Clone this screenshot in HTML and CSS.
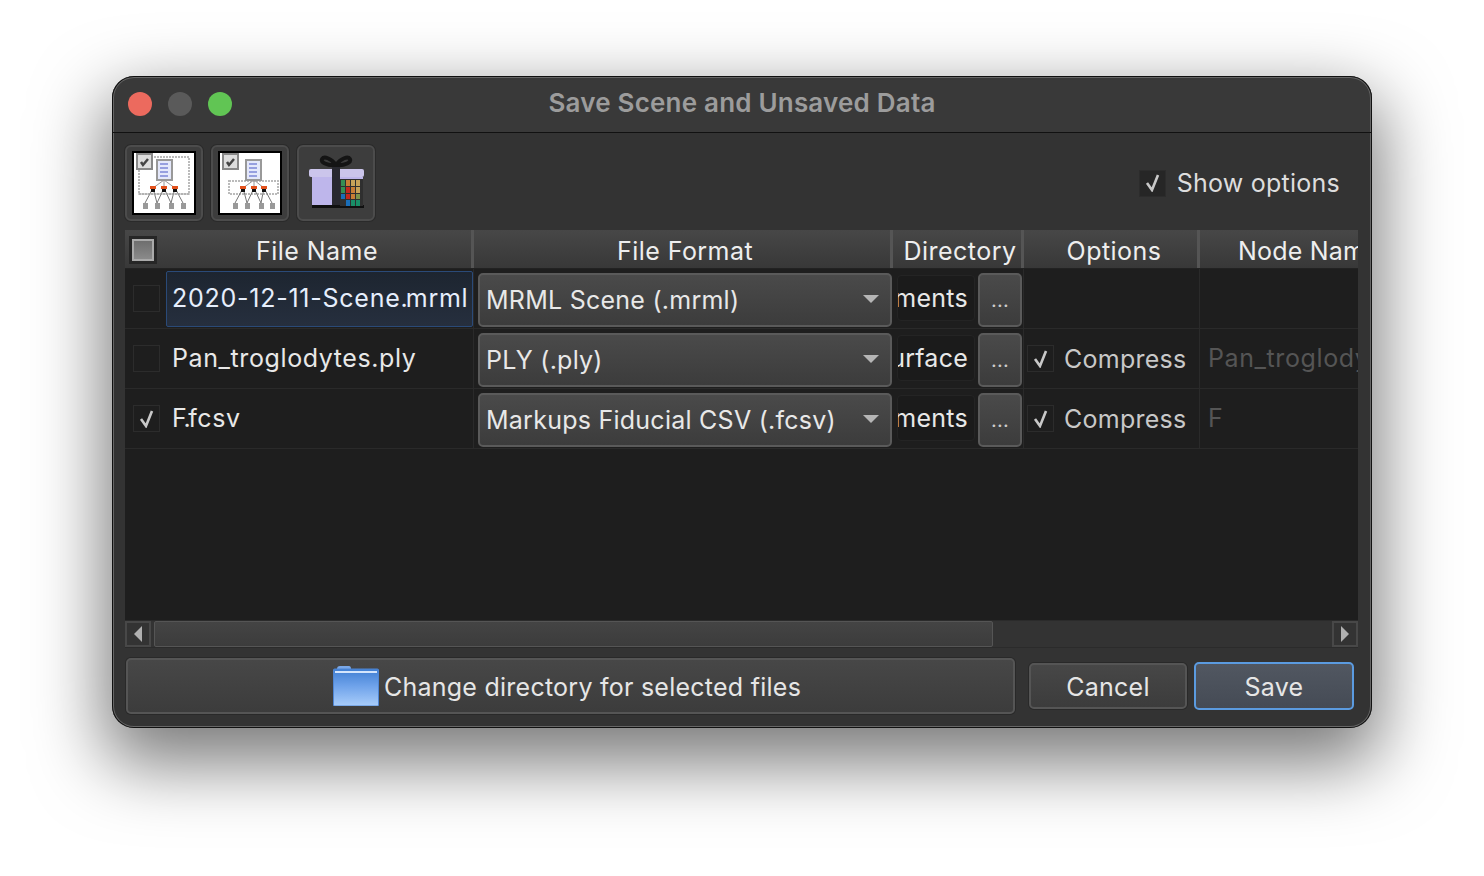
FILE: index.html
```html
<!DOCTYPE html>
<html lang="en">
<head>
    <meta charset="UTF-8">
    <title>Save Scene and Unsaved Data</title>
    <link rel="stylesheet" href="styles.css">
</head>
<body>
    <div class="window">
        <div class="titlebar">
            <div class="lights">
                <span class="light red"></span>
                <span class="light grey"></span>
                <span class="light green"></span>
            </div>
            <div class="title">Save Scene and Unsaved Data</div>
        </div>

        <div class="toolbar">
            <button class="tool">
                <svg class="icon" width="64" height="64" viewBox="0 0 64 64">
                    <rect x="1" y="1" width="62" height="62" fill="#fff" stroke="#000" stroke-width="2"/>
                    <rect x="7" y="6" width="50" height="37" fill="none" stroke="#bbb" stroke-width="2" stroke-dasharray="2 1"/>
                    <rect x="5" y="3" width="15" height="15" fill="#ddd" stroke="#888" stroke-width="2"/>
                    <path d="M9 11l2 3 5-6" fill="none" stroke="#444" stroke-width="2.5"/>
                    <rect x="25" y="9" width="15" height="20" fill="#e4e8fb" stroke="#999" stroke-width="2"/>
                    <path d="M28 13h8M28 17h8M28 21h8M28 25h8" stroke="#7c86d8" stroke-width="1.5"/>
                    <path d="M32 29L21 37M32 29v8M32 29l11 8" stroke="#999"/>
                    <path d="M21 37L13 52M21 37l4 15M43 37l-4 15M43 37l8 15M32 37l-7 15M32 37l7 15" stroke="#777" fill="none"/>
                    <path d="M6 43h52" stroke="#aaa"/>
                    <path d="M18 35h6v3h-6zM29 35h6v3h-6zM40 35h6v3h-6z" fill="#e2521d"/>
                    <path d="M19 38h4v3h-4zM30 38h4v3h-4zM41 38h4v3h-4z" fill="#111"/>
                    <path d="M11 52h5v6h-5zM23 52h5v6h-5zM37 52h5v6h-5zM49 52h5v6h-5z" fill="#999"/>
                </svg>
            </button>
            <button class="tool">
                <svg class="icon" width="64" height="64" viewBox="0 0 64 64">
                    <rect x="1" y="1" width="62" height="62" fill="#fff" stroke="#000" stroke-width="2"/>
                    <rect x="11" y="30" width="49" height="13" fill="none" stroke="#bbb" stroke-width="2" stroke-dasharray="2 1"/>
                    <rect x="5" y="3" width="15" height="15" fill="#ddd" stroke="#888" stroke-width="2"/>
                    <path d="M9 11l2 3 5-6" fill="none" stroke="#444" stroke-width="2.5"/>
                    <rect x="28" y="9" width="15" height="20" fill="#e4e8fb" stroke="#999" stroke-width="2"/>
                    <path d="M31 13h8M31 17h8M31 21h8M31 25h8" stroke="#7c86d8" stroke-width="1.5"/>
                    <path d="M36 29L25 37M36 29v8M36 29l10 8" stroke="#999"/>
                    <path d="M25 37L17 52M25 37l4 15M46 37l-3 15M46 37l8 15M36 37l-7 15M36 37l7 15" stroke="#777" fill="none"/>
                    <path d="M22 35h6v3h-6zM33 35h6v3h-6zM43 35h6v3h-6z" fill="#e2521d"/>
                    <path d="M23 38h4v3h-4zM34 38h4v3h-4zM44 38h4v3h-4z" fill="#111"/>
                    <path d="M15 52h5v6h-5zM27 52h5v6h-5zM41 52h5v6h-5zM52 52h5v6h-5z" fill="#999"/>
                </svg>
            </button>
            <button class="tool">
                <svg class="icon gift" width="64" height="64" viewBox="0 0 64 64">
                    <path d="M32 14C27 7 20 5 18 8s5 7 14 6c9 1 16-3 14-6s-9-1-14 6z" fill="none" stroke="#161616" stroke-width="4"/>
                    <rect x="8" y="26" width="51" height="28" fill="#cfc6ff"/>
                    <rect x="5" y="18" width="55" height="8" rx="2" fill="#ddd6ff"/>
                    <rect x="8" y="54" width="52" height="3" fill="#111"/>
                    <rect x="28" y="16" width="8" height="38" fill="#2b2b33"/>
                    <g>
                        <rect x="36" y="28" width="23" height="27" fill="#333"/>
                        <rect x="37" y="29" width="4" height="6" fill="#3a9a5a"/>
                        <rect x="42" y="29" width="4" height="6" fill="#d8883a"/>
                        <rect x="47" y="29" width="4" height="6" fill="#d8b060"/>
                        <rect x="52" y="29" width="4" height="6" fill="#d8b060"/>
                        <rect x="37" y="36" width="4" height="6" fill="#3a9a5a"/>
                        <rect x="42" y="36" width="4" height="6" fill="#d42a20"/>
                        <rect x="47" y="36" width="4" height="6" fill="#d8883a"/>
                        <rect x="52" y="36" width="4" height="6" fill="#d8b060"/>
                        <rect x="37" y="43" width="4" height="5" fill="#1c78c8"/>
                        <rect x="42" y="43" width="4" height="5" fill="#d42a20"/>
                        <rect x="47" y="43" width="4" height="5" fill="#d8883a"/>
                        <rect x="52" y="43" width="4" height="5" fill="#88a050"/>
                        <rect x="42" y="49" width="4" height="6" fill="#1c78c8"/>
                        <rect x="47" y="49" width="4" height="6" fill="#1a9a70"/>
                        <rect x="52" y="49" width="4" height="6" fill="#1a9a70"/>
                    </g>
                </svg>
            </button>
            <label class="show-options">
                <span class="check dark"><svg class="tick" width="17" height="18" viewBox="0 0 17 18"><path d="M3 9l5 7 6-15"/></svg></span>
                <span>Show options</span>
            </label>
        </div>

        <div class="table">
            <div class="row head">
                <div class="head-cell name-head">
                    <span class="head-check"><i></i></span>
                    <span>File Name</span>
                </div>
                <div class="head-cell format-head">File Format</div>
                <div class="head-cell dir-head">Directory</div>
                <div class="head-cell opt-head">Options</div>
                <div class="head-cell">Node Name</div>
            </div>

            <div class="row">
                <div class="cell name">
                    <span class="check"></span>
                    <div class="editor">2020-12-11-Scene<span class="tight">.</span>mrml</div>
                </div>
                <div class="cell">
                    <div class="combo"><span>MRML Scene (.mrml)</span><i class="caret"></i></div>
                </div>
                <div class="cell dir">
                    <div class="dir-field"><span>Documents</span></div>
                    <button class="dots">...</button>
                </div>
                <div class="cell opt"></div>
                <div class="cell node"></div>
            </div>

            <div class="row">
                <div class="cell name">
                    <span class="check"></span>
                    <div class="file">Pan_troglodytes.ply</div>
                </div>
                <div class="cell">
                    <div class="combo"><span>PLY (.ply)</span><i class="caret"></i></div>
                </div>
                <div class="cell dir">
                    <div class="dir-field"><span>Surface</span></div>
                    <button class="dots">...</button>
                </div>
                <div class="cell opt">
                    <span class="check"><svg class="tick" width="17" height="18" viewBox="0 0 17 18"><path d="M3 9l5 7 6-15"/></svg></span>
                    <span>Compress</span>
                </div>
                <div class="cell node">Pan_troglodytes</div>
            </div>

            <div class="row">
                <div class="cell name">
                    <span class="check"><svg class="tick" width="17" height="18" viewBox="0 0 17 18"><path d="M3 9l5 7 6-15"/></svg></span>
                    <div class="file"><span class="tight-f">F.</span>fcsv</div>
                </div>
                <div class="cell">
                    <div class="combo"><span>Markups Fiducial CSV (.fcsv)</span><i class="caret"></i></div>
                </div>
                <div class="cell dir">
                    <div class="dir-field"><span>Documents</span></div>
                    <button class="dots">...</button>
                </div>
                <div class="cell opt">
                    <span class="check"><svg class="tick" width="17" height="18" viewBox="0 0 17 18"><path d="M3 9l5 7 6-15"/></svg></span>
                    <span>Compress</span>
                </div>
                <div class="cell node">F</div>
            </div>
        </div>

        <div class="scrollbar">
            <div class="arrow"><i class="tri left"></i></div>
            <div class="track"><div class="thumb"></div></div>
            <div class="arrow"><i class="tri right"></i></div>
        </div>

        <div class="footer">
            <button class="btn change">
                <svg class="icon" width="46" height="40" viewBox="0 0 46 40">
                    <defs>
                        <linearGradient id="folder" x1="0" y1="0" x2="0" y2="1">
                            <stop offset="0" stop-color="#3f7ed2"/>
                            <stop offset="0.45" stop-color="#6ea2ea"/>
                            <stop offset="1" stop-color="#a9cdfa"/>
                        </linearGradient>
                    </defs>
                    <path d="M4 3Q4 0 7 0h9q2 0 2 3z" fill="#7aa8e8"/>
                    <rect x="0.5" y="3" width="45" height="37" rx="1" fill="url(#folder)" stroke="#4f86d4"/>
                    <rect x="2" y="5" width="42" height="2" fill="#d4e5fc"/>
                </svg>
                <span>Change directory for selected files</span>
            </button>
            <button class="btn cancel">Cancel</button>
            <button class="btn save">Save</button>
        </div>
    </div>
</body>
</html>
```

FILE: styles.css
```css
html, body{
    margin: 0;
    height: 876px;
    overflow: hidden;
    background: #fff;
}
body{
    padding: 76px 112px 0;
    box-sizing: border-box;
    font-family: "Inter", "Liberation Sans", sans-serif;
    font-size: 25px;
    letter-spacing: .25px;
    color: #e8e8e8;
}
button{
    font: inherit;
    letter-spacing: inherit;
    color: inherit;
    padding: 0;
}
.window{
    width: 1260px;
    height: 652px;
    box-sizing: border-box;
    background: linear-gradient(#393939 56px, #333 56px);
    border-radius: 22px;
    box-shadow: inset 0 0 0 1px #111, inset 0 0 0 2px #666, 0 28px 70px 8px rgba(0,0,0,.52);
    overflow: hidden;
    padding: 0 13px;
}
.icon{
    filter: blur(.4px);
    flex: none;
}
.icon.gift{
    filter: blur(.7px) brightness(.92);
}

/* title */
.titlebar{
    height: 56px;
    margin: 0 -13px;
    border-bottom: 1px solid #111;
    display: flex;
    align-items: center;
    justify-content: center;
    position: relative;
}
.lights{
    position: absolute;
    left: 16px;
    top: 16px;
    display: flex;
    gap: 16px;
}
.light{
    width: 24px;
    height: 24px;
    border-radius: 50%;
}
.red{ background: #ec6a5e; }
.grey{ background: #5a5a5a; }
.green{ background: #61c554; }
.title{
    font-size: 26px;
    font-weight: 600;
    letter-spacing: .2px;
    color: #9c9c9c;
    margin-top: -4px;
}

/* toolbar */
.toolbar{
    height: 97px;
    display: flex;
    align-items: flex-start;
    gap: 8px;
    padding-top: 12px;
    box-sizing: border-box;
}
.tool{
    width: 78px;
    height: 76px;
    background: #3d3d3d;
    border: 2px solid #4c4c4c;
    border-radius: 6px;
    box-shadow: 0 0 0 1px #2a2a2a;
    display: flex;
    align-items: center;
    justify-content: center;
}
.show-options{
    margin-left: auto;
    margin-right: 19px;
    margin-top: 23px;
    display: flex;
    align-items: center;
    gap: 11px;
    color: #ddd;
}

/* checks */
.check{
    width: 27px;
    height: 27px;
    flex: none;
    box-sizing: border-box;
    border: 1px solid #2c2c2c;
    background: #1e1e1e;
    display: flex;
    align-items: center;
    justify-content: center;
}
.check.dark{
    background: #262626;
    border-color: #2c2c2c;
}
.tick path{
    fill: none;
    stroke: #c8c8c8;
    stroke-width: 2.6;
}

/* table */
.table{
    width: 1233px;
    height: 390px;
    background: #1e1e1e;
    overflow: hidden;
}
.row{
    display: grid;
    grid-template-columns: 349px 419px 131px 176px 260px;
    height: 60px;
    border-bottom: 1px solid #2a2a2a;
    box-sizing: border-box;
}
.row.head{
    height: 39px;
    border-bottom: 1px solid #222;
    letter-spacing: .45px;
}
.head-cell{
    display: flex;
    align-items: center;
    justify-content: center;
    padding-top: 4px;
    background: linear-gradient(#474747, #383838);
    border-right: 3px solid #555;
    box-sizing: border-box;
    white-space: nowrap;
    overflow: hidden;
    color: #eee;
}
.head-cell:last-child{
    justify-content: flex-start;
    padding-left: 38px;
    border-right: 0;
    letter-spacing: .2px;
}
.name-head{
    position: relative;
    padding-left: 38px;
}
.format-head{
    padding-left: 6px;
}
.dir-head{
    padding-left: 6px;
}
.opt-head{
    padding-left: 7px;
}
.head-check{
    position: absolute;
    left: 4px;
    top: 6px;
    width: 28px;
    height: 28px;
    background: #262626;
    display: flex;
    align-items: center;
    justify-content: center;
}
.head-check i{
    width: 22px;
    height: 22px;
    box-sizing: border-box;
    border: 2px solid #aaa;
    background: linear-gradient(#6e6e6e, #8a8a8a);
}
.cell{
    display: flex;
    align-items: center;
    min-width: 0;
    box-sizing: border-box;
    white-space: nowrap;
    overflow: hidden;
}
.cell.name{
    padding-left: 8px;
    border-right: 1px solid #2a2a2a;
    letter-spacing: .6px;
}
.cell.name .check{
    margin-right: 6px;
}
.editor{
    flex: 1;
    height: 56px;
    line-height: 52px;
    box-sizing: border-box;
    padding-left: 5px;
    letter-spacing: .75px;
    color: #e6eefc;
    background: linear-gradient(#1d2530, #262f3e);
    border: 1px solid #2a4a78;
    border-radius: 2px;
}
.file{
    padding-left: 6px;
    line-height: 54px;
    height: 56px;
}
.tight{
    letter-spacing: -2px;
}
.tight-f{
    letter-spacing: -2.5px;
}
.combo{
    width: 414px;
    height: 54px;
    margin-left: 4px;
    margin-top: 3px;
    box-sizing: border-box;
    display: flex;
    align-items: center;
    justify-content: space-between;
    padding: 0 11px 0 6px;
    background: linear-gradient(#4a4a4a, #3c3c3c);
    border: 2px solid #5a5a5a;
    border-radius: 5px;
}
.caret{
    width: 0;
    height: 0;
    border-left: 8px solid transparent;
    border-right: 8px solid transparent;
    border-top: 8px solid #b5b5b5;
    margin-top: -3px;
}
.cell.dir{
    padding-left: 4px;
    border-right: 1px solid #2a2a2a;
}
.dir-field{
    width: 78px;
    height: 46px;
    overflow: hidden;
    display: flex;
    justify-content: flex-end;
    align-items: center;
    background: #1b1b1b;
    border: 1px solid #242424;
    border-radius: 4px;
    box-sizing: border-box;
    padding-right: 6px;
    margin-right: 3px;
    margin-top: -2px;
    flex: none;
}
.dots{
    width: 44px;
    height: 54px;
    margin-top: 3px;
    flex: none;
    box-sizing: border-box;
    background: linear-gradient(#4a4a4a, #3c3c3c);
    border: 2px solid #5a5a5a;
    border-radius: 5px;
    color: #ccc;
    font-size: 20px;
}
.cell.opt{
    padding-left: 3px;
    gap: 10px;
    color: #c8c8c8;
    border-right: 1px solid #2a2a2a;
}
.cell.node{
    padding-left: 8px;
    padding-bottom: 2px;
    letter-spacing: .6px;
    color: #555;
}

/* scrollbar */
.scrollbar{
    height: 28px;
    display: flex;
    border-top: 1px solid #2b2b2b;
    border-bottom: 1px solid #2b2b2b;
    box-sizing: border-box;
    width: 1233px;
}
.arrow{
    width: 26px;
    flex: none;
    box-sizing: border-box;
    border: 2px solid #484848;
    display: flex;
    align-items: center;
    justify-content: center;
}
.tri{
    width: 0;
    height: 0;
    border-top: 8px solid transparent;
    border-bottom: 8px solid transparent;
}
.tri.left{ border-right: 8px solid #b0b0b0; }
.tri.right{ border-left: 8px solid #b0b0b0; }
.track{
    flex: 1;
    padding-left: 3px;
}
.thumb{
    width: 839px;
    height: 100%;
    box-sizing: border-box;
    background: linear-gradient(#444, #3c3c3c);
    border: 1px solid #555;
    border-radius: 2px;
}

/* buttons */
.footer{
    display: flex;
    align-items: center;
    margin-top: 9px;
    padding-left: 1px;
    height: 58px;
}
.btn{
    background: linear-gradient(#474747, #3c3c3c);
    border: 2px solid #555;
    border-radius: 5px;
    box-shadow: 0 0 0 1px #292929;
    box-sizing: border-box;
    color: #e6e6e6;
    padding-top: 2px;
}
.change{
    width: 889px;
    height: 56px;
    margin-right: 14px;
    display: flex;
    align-items: center;
    justify-content: center;
    gap: 5px;
    padding-right: 7px;
    padding-top: 0;
}
.change span{
    padding-top: 2px;
}
.cancel{
    width: 158px;
    height: 46px;
    margin-right: 7px;
}
.save{
    width: 160px;
    height: 48px;
    background: linear-gradient(#515761, #454b55);
    border: 2px solid #5b9be0;
    box-shadow: none;
}
```
